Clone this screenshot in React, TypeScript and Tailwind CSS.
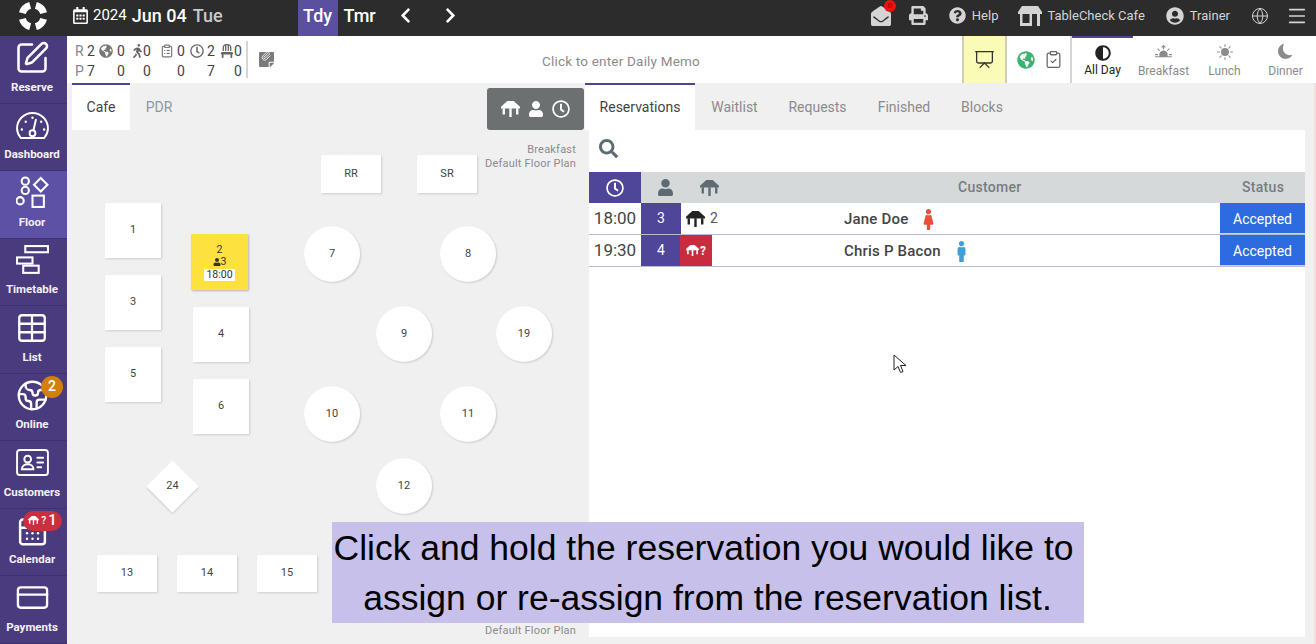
import { ReactNode } from "react";
import { BsMoonFill, BsSunFill, BsSunriseFill } from "react-icons/bs";
import {
  FaAdjust,
  FaChair,
  FaChevronLeft,
  FaChevronRight,
  FaEnvelopeOpen,
  FaFemale,
  FaGlobeAmericas,
  FaMale,
  FaPrint,
  FaQuestionCircle,
  FaRegCalendarAlt,
  FaRegClock,
  FaSearch,
  FaStickyNote,
  FaUser,
  FaUserCircle,
  FaWalking,
} from "react-icons/fa";
import {
  CalendarDays,
  ClipboardCheck,
  ClipboardList,
  CreditCard,
  Earth,
  Globe,
  Menu,
  Paperclip,
  Presentation,
  SquarePen,
  Table,
} from "lucide-react";

const TableIcon = ({ className }: { className?: string }) => (
  <svg viewBox="0 0 24 20" className={className} fill="currentColor">
    <path d="M8 0h8l8 7v2.500H0V7z" />
    <path d="M2 9h3v8H2zM10.500 9h3v11h-3zM19 9h3v8h-3z" />
  </svg>
);

const StoreIcon = ({ className }: { className?: string }) => (
  <svg viewBox="0 0 24 20" className={className} fill="currentColor">
    <path d="M4 0h16l4 6v2H0V6z" />
    <path d="M2 8h2.500v12H2zM4 17h10v3H4zM11.500 8H14v10h-2.500zM19 8h3v12h-3z" />
  </svg>
);

const ShapesIcon = () => (
  <svg viewBox="0 0 32 32" className="h-[33px] w-[33px]" fill="none" stroke="currentColor" strokeWidth="2">
    <circle cx="9" cy="5" r="3.500" />
    <circle cx="9" cy="14" r="3.500" />
    <circle cx="4" cy="24" r="3.500" />
    <path d="M24 2l6.500 6.500L24 15l-6.500-6.500z" />
    <rect x="16" y="19" width="11" height="11" />
  </svg>
);

const TimetableIcon = () => (
  <svg viewBox="0 0 32 30" className="h-[31px] w-[33px]" fill="none" stroke="currentColor" strokeWidth="2">
    <rect x="9" y="1" width="22" height="6" />
    <rect x="1" y="12" width="15" height="6" />
    <rect x="7" y="20" width="15" height="7" />
  </svg>
);

const GaugeIcon = () => (
  <svg viewBox="0 0 36 30" className="h-[29px] w-[35px]" fill="none" stroke="currentColor" strokeWidth="2" strokeLinecap="round">
    <path d="M6 28Q2 23 2 18A16 16 0 0 1 34 18Q34 23 30 28Z" />
    <circle cx="18" cy="23" r="3" />
    <path d="M19 20l2.500-11" />
    <path d="M7 19v.1M11 11v.1M18 7v.1M27 11v.1M30 19v.1" strokeWidth="2.500" />
  </svg>
);

const CardPersonIcon = () => (
  <svg viewBox="0 0 34 28" className="h-[27px] w-[33px]" fill="none" stroke="currentColor" strokeWidth="2" strokeLinecap="round">
    <rect x="1" y="1" width="32" height="26" rx="3" />
    <circle cx="12" cy="10.500" r="3.500" />
    <path d="M6 21c0-7 12-7 12 0z" />
    <path d="M22 9h6M22 14h6M22 19h4" />
  </svg>
);

const navItems: { label: string; icon: ReactNode; active?: boolean }[] = [
  { label: "Reserve", icon: <SquarePen size={36} strokeWidth={1.7} /> },
  { label: "Dashboard", icon: <GaugeIcon /> },
  { label: "Floor", icon: <ShapesIcon />, active: true },
  { label: "Timetable", icon: <TimetableIcon /> },
  { label: "List", icon: <Table size={34} strokeWidth={1.6} /> },
  { label: "Online", icon: <Earth size={33} strokeWidth={1.7} /> },
  { label: "Customers", icon: <CardPersonIcon /> },
  { label: "Calendar", icon: <CalendarDays size={33} strokeWidth={1.8} /> },
  { label: "Payments", icon: <CreditCard size={35} strokeWidth={1.6} /> },
];

const squares = [
  { n: "1", c: "left-[38px] top-[120px] w-[56px] h-[55px]" },
  { n: "3", c: "left-[38px] top-[192px] w-[56px] h-[55px]" },
  { n: "5", c: "left-[38px] top-[264px] w-[56px] h-[55px]" },
  { n: "4", c: "left-[126px] top-[224px] w-[56px] h-[55px]" },
  { n: "6", c: "left-[126px] top-[296px] w-[56px] h-[55px]" },
  { n: "RR", c: "left-[254px] top-[72px] w-[60px] h-[38px]" },
  { n: "SR", c: "left-[350px] top-[72px] w-[60px] h-[38px]" },
  { n: "13", c: "left-[30px] top-[472px] w-[60px] h-[37px]" },
  { n: "14", c: "left-[110px] top-[472px] w-[60px] h-[37px]" },
  { n: "15", c: "left-[190px] top-[472px] w-[60px] h-[37px]" },
];

const circles = [
  { n: "7", c: "left-[237px] top-[143px]" },
  { n: "8", c: "left-[373px] top-[143px]" },
  { n: "9", c: "left-[309px] top-[223px]" },
  { n: "19", c: "left-[429px] top-[223px]" },
  { n: "10", c: "left-[237px] top-[303px]" },
  { n: "11", c: "left-[373px] top-[303px]" },
  { n: "12", c: "left-[309px] top-[375px]" },
];

const stats = [
  [<span key="r" className="text-[#7d8a94]">R</span>, "2", <FaGlobeAmericas key="g" className="text-[#777]" />, "0", <FaWalking key="w" className="text-[#666]" />, "0", <ClipboardList key="c" size={14} className="text-[#777]" />, "0", <FaRegClock key="k" className="text-[#666]" />, "2", <FaChair key="h" className="text-[#666]" />, "0"],
  [<span key="p" className="text-[#7d8a94]">P</span>, "7", "", "0", "", "0", "", "0", "", "7", "", "0"],
];

export default function App() {
  return (
    <div className="flex h-[644px] w-[1316px] flex-col overflow-hidden bg-[#f0f0f0] font-['Roboto',sans-serif] text-[#333]">
      {/* top bar */}
      <header className="flex h-9 shrink-0 items-stretch bg-[#2c2c2c] text-white">
        <div className="flex w-[65px] items-center justify-center pb-[4px]">
          <svg viewBox="0 0 30 30" className="h-[30px] w-[30px]" fill="none" stroke="white" strokeWidth="7">
            <path d="M4.400 12.150A11 11 0 0 1 12.150 4.400" />
            <path d="M17.850 4.400A11 11 0 0 1 25.600 12.150" />
            <path d="M25.600 17.850A11 11 0 0 1 17.850 25.600" />
            <path d="M12.150 25.600A11 11 0 0 1 4.400 17.850" />
          </svg>
        </div>
        <div className="flex items-center pb-[5px]">
          <FaRegCalendarAlt className="ml-[7px] text-[17px]" />
          <span className="ml-[4px] text-[15px]">2024</span>
          <span className="ml-[5px] text-[18px] font-medium">Jun 04</span>
          <span className="ml-[6px] text-[18px] font-medium text-[#c9c9c9]">Tue</span>
        </div>
        <div className="ml-[75px] flex w-10 items-center justify-center bg-[#5a4fa0] pb-[5px] text-[18px] font-medium">Tdy</div>
        <div className="flex items-center pb-[5px]">
          <span className="ml-[6px] text-[18px] font-medium">Tmr</span>
          <FaChevronLeft className="ml-[21px] text-[17px]" />
          <FaChevronRight className="ml-[28px] text-[17px]" />
        </div>
        <div className="ml-auto flex items-center pb-[5px] pr-[8px] text-[13px] text-[#d4d4d4]">
          <div className="relative">
            <FaEnvelopeOpen className="text-[20px]" />
            <span className="absolute -right-[5px] -top-[6px] flex h-3 w-3 items-center justify-center rounded-full bg-[#f01010] text-[8px] text-[#800]">0</span>
          </div>
          <FaPrint className="ml-[18px] text-[19px]" />
          <FaQuestionCircle className="ml-[21px] text-[17px]" />
          <span className="ml-[6px]">Help</span>
          <StoreIcon className="ml-[20px] h-[20px] w-[24px]" />
          <span className="ml-[5px]">TableCheck Cafe</span>
          <FaUserCircle className="ml-[21px] text-[18px]" />
          <span className="ml-[6px]">Trainer</span>
          <Globe size={18} strokeWidth={1.3} className="ml-[21px]" />
          <Menu size={22} strokeWidth={1.8} className="ml-[17px]" />
        </div>
      </header>

      <div className="flex min-h-0 flex-1">
        {/* left nav */}
        <nav className="flex w-[67px] shrink-0 flex-col bg-[#4a3b7f] text-white">
          {navItems.map((item) => (
            <div
              key={item.label}
              className={`relative flex h-[67.500px] flex-col items-center justify-end border-b border-[#3d3170] pb-[9px] pr-[3px] ${item.active ? "bg-[#5c51a5]" : ""}`}
            >
              <div className="flex h-[38px] items-center">{item.icon}</div>
              <span className="mt-[3px] text-[11.500px] font-bold leading-[14px] text-[#f2f2f2]">{item.label}</span>
              {item.label === "Online" && (
                <span className="absolute right-[4px] top-[2px] flex h-[22px] w-[22px] items-center justify-center rounded-full bg-[#d27f0c] text-[14px] font-medium">2</span>
              )}
              {item.label === "Calendar" && (
                <span className="absolute left-[23px] top-[2px] flex h-[20px] w-[39px] items-center justify-center gap-[2px] rounded-full bg-[#c9303f] text-[14px] font-medium">
                  <TableIcon className="h-[9px] w-[11px]" />
                  <span className="text-[10px]">?</span>
                  <span className="text-[15px]">1</span>
                </span>
              )}
            </div>
          ))}
        </nav>

        <div className="flex min-w-0 flex-1 flex-col">
          {/* info strip */}
          <div className="flex h-[47px] shrink-0 bg-white">
            <div className="my-[5px] grid w-[181px] shrink-0 grid-cols-[12px_12px_18px_15px_11px_17px_17px_13px_17px_13px_14px_10px] content-center gap-y-[4px] border-r-2 border-[#d5d5d5] pl-[8px] pt-[2px] text-[14px] leading-[16px] text-[#444]">
              {stats.flat().map((cell, i) => (
                <div key={i} className="flex h-4 items-center">{cell}</div>
              ))}
            </div>
            <div className="flex w-[42px] items-center pl-[10px] text-[#7a7a7a]">
              <div className="relative">
                <FaStickyNote className="text-[17px]" />
                <Paperclip size={10} className="absolute left-[3px] top-0 text-white" />
              </div>
            </div>
            <div className="flex flex-1 items-center justify-center pr-[10px] pt-[3px] text-[13.500px] tracking-[0.2px] text-[#8b8b8b]">Click to enter Daily Memo</div>
            <div className="flex w-[45px] items-center justify-center border-x-2 border-[#cfcfb0] bg-[#fbfbb8]">
              <Presentation size={21} strokeWidth={1.5} className="text-[#333]" />
            </div>
            <div className="flex w-[65px] items-center justify-center gap-[9px] border-r-2 border-[#d5d5d5] pl-[3px]">
              <FaGlobeAmericas className="text-[18px] text-[#3cb371]" />
              <ClipboardCheck size={19} strokeWidth={1.6} className="text-[#666]" />
            </div>
            <div className="flex w-[61px] flex-col items-center border-t-2 border-[#4f4493] pt-[7px] text-[#222]">
              <FaAdjust className="text-[16px]" />
              <span className="text-[12px]">All Day</span>
            </div>
            <div className="flex w-[61px] flex-col items-center pt-[8px] text-[#8b8b8b]">
              <BsSunriseFill className="text-[17px]" />
              <span className="mt-[1px] text-[12px]">Breakfast</span>
            </div>
            <div className="flex w-[61px] flex-col items-center pt-[8px] text-[#8b8b8b]">
              <BsSunFill className="text-[16px]" />
              <span className="mt-[2px] text-[12px]">Lunch</span>
            </div>
            <div className="flex w-[61px] flex-col items-center pt-[8px] text-[#8b8b8b]">
              <BsMoonFill className="text-[15px]" />
              <span className="mt-[3px] text-[12px]">Dinner</span>
            </div>
          </div>

          <div className="flex min-h-0 flex-1">
            {/* floor plan */}
            <section className="relative w-[518px] shrink-0">
              <div className="flex h-[47px] pl-[5px] text-[14px]">
                <div className="flex w-[58px] items-center justify-center border-t-2 border-[#4f4493] bg-white text-[#444]">Cafe</div>
                <div className="flex w-[58px] items-center justify-center pt-[1px] text-[#8a99a3]">PDR</div>
              </div>
              <div className="absolute left-[420px] top-[5px] flex h-[42px] w-[97px] items-center justify-center gap-[8px] rounded-[3px] bg-[#6c7070] text-white">
                <TableIcon className="h-[16px] w-[19px]" />
                <FaUser className="text-[16px]" />
                <FaRegClock className="text-[18px]" />
              </div>
              <div className="absolute right-[9px] top-[60px] text-right text-[11px] leading-[14px] tracking-[0.2px] text-[#8b8b8b]">
                <div>Breakfast</div>
                <div>Default Floor Plan</div>
              </div>

              {squares.map((t) => (
                <div key={t.n} className={`absolute flex items-center justify-center bg-white text-[11px] text-[#444] shadow-[1px_1px_2px_rgba(0,0,0,0.15)] ${t.c}`}>{t.n}</div>
              ))}
              {circles.map((t) => (
                <div key={t.n} className={`absolute flex h-[56px] w-[56px] items-center justify-center rounded-full bg-white text-[11px] text-[#444] shadow-[1px_1px_2px_rgba(0,0,0,0.15)] ${t.c}`}>{t.n}</div>
              ))}
              <div className="absolute left-[87px] top-[385px] flex h-[37px] w-[37px] rotate-45 items-center justify-center bg-white shadow-[1px_1px_2px_rgba(0,0,0,0.15)]">
                <span className="-rotate-45 text-[11px] text-[#444]">24</span>
              </div>
              <div className="absolute left-[124px] top-[151px] flex h-[56px] w-[57px] flex-col items-center justify-center bg-[#fde23f] text-[10.500px] leading-[12px] text-[#333] shadow-[1px_1px_2px_rgba(0,0,0,0.25)]">
                <span>2</span>
                <span className="flex items-center"><FaUser className="text-[8px]" />3</span>
                <span className="mt-[1px] bg-white px-[2px] text-[10.500px]">18:00</span>
              </div>

              <div className="absolute bottom-[5px] right-[9px] text-[11px] tracking-[0.2px] text-[#8b8b8b]">Default Floor Plan</div>
            </section>

            {/* reservations */}
            <section className="flex w-[720px] shrink-0 flex-col">
              <div className="flex h-[47px] text-[14px] text-[#8b8b8b]">
                <div className="flex w-[110px] items-center justify-center border-t-2 border-[#4f4493] bg-white text-[#444]">Reservations</div>
                <div className="flex w-[79px] items-center justify-center pt-[1px]">Waitlist</div>
                <div className="flex w-[87px] items-center justify-center pt-[1px]">Requests</div>
                <div className="flex w-[86px] items-center justify-center pt-[1px]">Finished</div>
                <div className="flex w-[70px] items-center justify-center pt-[1px]">Blocks</div>
              </div>
              <div className="mb-[7px] ml-[4px] flex flex-1 flex-col bg-white">
                <div className="flex h-[42px] items-center pb-[5px] pl-[10px] text-[#5f6b73]">
                  <FaSearch className="text-[19px]" />
                </div>
                <div className="flex h-[31px] items-center bg-[#d5d9d9] text-[14px] font-medium text-[#777c81]">
                  <div className="flex h-full w-[52px] items-center justify-center bg-[#4f4599] text-white">
                    <FaRegClock className="text-[18px]" />
                  </div>
                  <div className="flex w-[48px] justify-center text-[#5f6b73]"><FaUser className="text-[17px]" /></div>
                  <div className="flex w-[40px] justify-center text-[#5f6b73]"><TableIcon className="h-[16px] w-[19px]" /></div>
                  <div className="w-[490px] pb-[1px] pl-[229px] tracking-[0.3px]">Customer</div>
                  <div className="flex-1 pb-[1px] pl-[23px] tracking-[0.3px]">Status</div>
                </div>
                <Row
                  time="18:00"
                  pax="3"
                  table={
                    <div className="flex w-[163px] items-center pl-[5px] text-[14px] text-[#555]">
                      <TableIcon className="h-[16px] w-[19px] text-[#222]" />
                      <span className="ml-[5px]">2</span>
                    </div>
                  }
                  name="Jane Doe"
                  icon={<FaFemale className="ml-[10px] text-[21px] text-[#e9503c]" />}
                />
                <Row
                  time="19:30"
                  pax="4"
                  table={
                    <div className="flex w-[163px]">
                      <div className="-ml-[1px] flex h-full w-[32px] items-center justify-center gap-[1px] bg-[#c82d3f] text-[12px] font-bold text-white">
                        <TableIcon className="h-[11px] w-[13px]" />?
                      </div>
                    </div>
                  }
                  name="Chris P Bacon"
                  icon={<FaMale className="ml-[10px] text-[21px] text-[#3fa0d8]" />}
                />
              </div>
            </section>
            <div className="flex-1 border-r-2 border-[#f9dcdc]" />
          </div>
        </div>
      </div>

      {/* caption over the page */}
      <div className="absolute left-[332px] top-[522px] flex h-[101px] w-[752px] flex-col items-center justify-center bg-[#c6c0ea] font-['Liberation_Sans',sans-serif] text-[35.500px] leading-[50px] text-black">
        <div className="pr-[9px]">Click and hold the reservation you would like to</div>
        <div className="pr-[1px]">assign or re-assign from the reservation list.</div>
      </div>

      {/* mouse cursor */}
      <svg viewBox="0 0 14 20" className="absolute left-[893px] top-[354px] h-5 w-[14px]" fill="white" stroke="#222" strokeWidth="1">
        <path d="M1 1v15l4-3.500 2.500 6 2.500-1-2.500-6H13z" />
      </svg>
    </div>
  );
}

function Row({ time, pax, table, name, icon }: { time: string; pax: string; table: ReactNode; name: string; icon: ReactNode }) {
  return (
    <div className="flex h-8 items-stretch border-b border-[#b9b9d4] text-[#444]">
      <div className="flex w-[52px] items-center justify-center text-[17px]">{time}</div>
      <div className="flex w-10 items-center justify-center bg-[#4f4599] text-[14px] text-white">{pax}</div>
      {table}
      <div className="flex flex-1 items-center pt-[1px] text-[15px] font-medium tracking-[0.2px]">
        {name}
        {icon}
      </div>
      <div className="flex w-[85px] items-center justify-center border-b border-[#c8d3f0] bg-[#2f6be0] pt-[2px] text-[14px] text-white">Accepted</div>
    </div>
  );
}
